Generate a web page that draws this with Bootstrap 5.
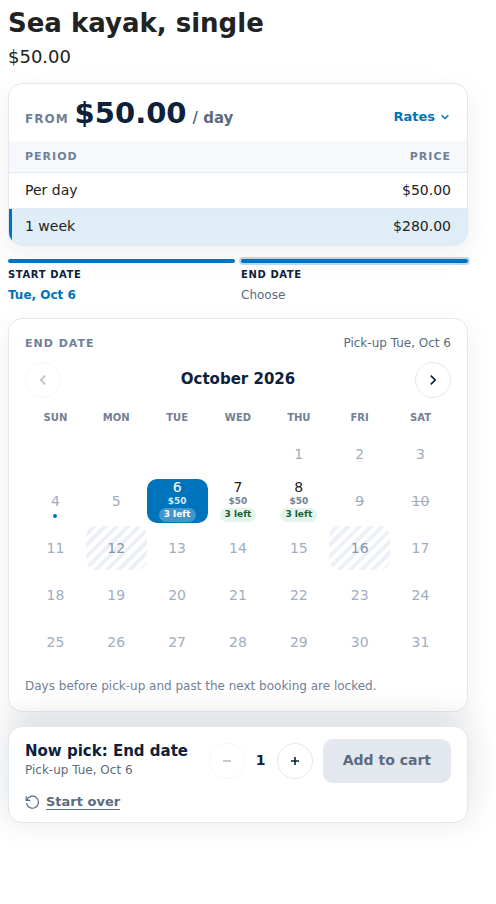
<!DOCTYPE html>
<html lang="en">
<head>
<meta charset="utf-8">
<meta name="viewport" content="width=device-width, initial-scale=1">
<title>Sea kayak, single</title>
<link href="https://cdn.jsdelivr.net/npm/bootstrap@5.3.0/dist/css/bootstrap.min.css" rel="stylesheet">
<style>
  :root { --brand: #0073bd; --navy: #0d213b; --muted: #718096; --slate: #5b6b80; --line: #e2e8f0; --ink: #222; }
  body { font-family: "DejaVu Sans", sans-serif; font-size: 14px; line-height: 20px; color: var(--ink); background: #fff; }
  .rental { padding: 8px 28px 48px 8px; }
  .product-title { font-size: 26px; line-height: 30px; font-weight: 700; color: var(--ink); }
  .product-price { font-size: 18px; line-height: 26px; margin: 6px 0 13px; }
  .panel { border: 1px solid var(--line); border-radius: 14px; background: #fff; box-shadow: 0 8px 28px rgba(15, 30, 50, .07); }
  .overline { font-size: 11px; line-height: 16px; font-weight: 700; letter-spacing: 1px; color: var(--muted); text-transform: uppercase; }

  .rates-head { padding: 11px 16px 10px; }
  .rates-head .overline { font-size: 12px; }
  .price-line { gap: 6px; }
  .amount { font-size: 29px; line-height: 36px; font-weight: 700; color: var(--navy); }
  .unit { font-size: 15px; font-weight: 700; color: var(--slate); }
  .rates-toggle { border: 0; background: none; padding: 0; font-size: 13px; font-weight: 700; color: var(--brand); }
  .rates-list { overflow: hidden; border-radius: 0 0 13px 13px; }
  .rates-table { --bs-table-bg: transparent; color: var(--ink); font-size: 14px; line-height: 20px; }
  .rates-table > :not(caption) > * > * { padding: 7px 16px 8px; border-bottom: 1px solid var(--line); }
  .rates-table > thead > tr > th { background: #f6f8fc; padding: 8px 16px 7px; }
  .rates-table > tbody > tr:last-child > td { border-bottom: 0; padding-bottom: 9px; background: #dfedf7; }
  .rates-table > tbody > tr:last-child > td:first-child { box-shadow: inset 3px 0 0 var(--brand); }

  .steps { display: grid; grid-template-columns: 1fr 1fr; gap: 6px; margin: 13px 0 14px; }
  .step-item { border: 0; background: none; padding: 0; text-align: left; color: var(--slate); font-size: 12px; line-height: 18px; }
  .step-bar { display: block; height: 4px; border-radius: 2px; background: var(--brand); }
  .step-item.current .step-bar { box-shadow: 0 0 0 2px rgba(0, 115, 189, .25); }
  .step-label { display: block; margin: 4px 0 3px; font-size: 10px; line-height: 16px; font-weight: 700; letter-spacing: .06em; color: var(--navy); }
  .step-value.chosen { font-weight: 700; color: var(--brand); }

  .calendar { padding: 15px 16px 16px; }
  .hint { font-size: 12px; line-height: 18px; color: var(--slate); }
  .month-nav { margin-top: 10px; }
  .month { font-size: 15px; line-height: 22px; font-weight: 700; color: var(--navy); padding-bottom: 2px; }
  .round-btn { width: 36px; height: 36px; padding: 0; flex: none; display: flex; align-items: center; justify-content: center; border: 1px solid var(--line); border-radius: 50%; background: #fff; color: var(--navy); }
  .round-btn:disabled { opacity: .35; color: #444; }
  .days { width: 100%; table-layout: fixed; border-collapse: separate; border-spacing: 0 3px; }
  .days th { font-size: 10px; line-height: 16px; padding: 9px 0 3px; font-weight: 700; text-align: center; color: var(--muted); }
  .days td { padding: 0; height: 44px; }
  .day-btn { display: flex; flex-direction: column; align-items: center; justify-content: center; width: 100%; height: 44px; padding: 0; border: 0; border-radius: 10px; background: none; color: var(--ink); font-size: 14px; line-height: 16px; }
  .day-btn.open { padding-bottom: 2px; }
  .day-btn:disabled { color: #a0aec0; }
  .day-btn.struck { text-decoration: line-through; }
  .day-btn.held { color: #8795aa; background: repeating-linear-gradient(135deg, #fff 0 4px, #edf0f7 4px 8px); }
  .day-btn.marked { position: relative; }
  .day-btn.marked::after { content: ""; position: absolute; bottom: 5px; width: 4px; height: 4px; border-radius: 50%; background: var(--brand); }
  .day-cost { font-size: 9px; line-height: 12px; font-weight: 700; color: var(--muted); }
  .stock { font-size: 9px; line-height: 12px; font-weight: 700; padding: 0 5px 2px; margin-top: 1px; border-radius: 7px; background: #e4f4ea; color: #17603a; }
  .day-btn.picked { background: var(--brand); color: #fff; }
  .picked .day-cost { color: #d9eaf5; }
  .picked .stock { background: rgba(255, 255, 255, .25); color: #fff; }
  .note { margin: 10px 0 0; color: var(--muted); }

  .summary { position: relative; margin-top: 14px; padding: 12px 16px; box-shadow: 0 -6px 34px rgba(15, 30, 50, .15); }
  .summary .month { line-height: 20px; padding: 0; }
  .caption-block { padding-bottom: 2px; }
  .qty { min-width: 24px; font-size: 14px; font-weight: 700; color: var(--navy); text-align: center; padding-bottom: 2px; }
  .actions { gap: 10px; }
  .cart-btn { border: 0; border-radius: 10px; height: 44px; padding: 0 20px 2px; background: #e2e8ee; color: var(--slate); font-size: 14px; font-weight: 700; white-space: nowrap; }
  .restart { display: flex; width: fit-content; align-items: center; gap: 6px; margin-top: 11px; font-size: 13px; line-height: 15px; font-weight: 700; color: var(--slate); text-decoration: none; }
  .restart span { border-bottom: 1px solid var(--slate); }
  svg { fill: none; stroke: currentColor; flex: none; }
</style>
</head>
<body>
<main class="rental">
  <h1 class="product-title mb-0">Sea kayak, single</h1>
  <p class="product-price">$50.00</p>

  <section class="panel" aria-label="Rates">
    <div class="rates-head d-flex justify-content-between align-items-center">
      <div class="price-line d-flex align-items-baseline">
        <span class="overline">From</span>
        <span class="amount">$50.00</span>
        <span class="unit">/ day</span>
      </div>
      <button type="button" class="rates-toggle d-flex align-items-center gap-1 mt-2">Rates
        <svg width="12" height="12" viewBox="0 0 12 12" stroke-width="1.4" aria-hidden="true"><path d="M2.6 4.2 6 7.6 9.4 4.2"/></svg>
      </button>
    </div>
    <div class="rates-list">
      <table class="table rates-table mb-0">
        <thead><tr><th class="overline" scope="col">Period</th><th class="overline text-end" scope="col">Price</th></tr></thead>
        <tbody>
          <tr><td>Per day</td><td class="text-end">$50.00</td></tr>
          <tr><td>1 week</td><td class="text-end">$280.00</td></tr>
        </tbody>
      </table>
    </div>
  </section>

  <div class="steps">
    <button type="button" class="step-item"><span class="step-bar"></span><span class="step-label">START DATE</span><span class="step-value chosen">Tue, Oct 6</span></button>
    <button type="button" class="step-item current"><span class="step-bar"></span><span class="step-label">END DATE</span><span class="step-value">Choose</span></button>
  </div>

  <section class="panel calendar" aria-label="End date">
    <div class="d-flex justify-content-between align-items-end">
      <span class="overline">End date</span><span class="hint">Pick-up Tue, Oct 6</span>
    </div>
    <div class="month-nav d-flex justify-content-between align-items-center">
      <button type="button" class="round-btn" disabled aria-label="Previous month"><svg width="16" height="16" viewBox="0 0 16 16" stroke-width="1.7" aria-hidden="true"><path d="M10.2 3.6 5.8 8l4.4 4.4"/></svg></button>
      <h2 class="month mb-0">October 2026</h2>
      <button type="button" class="round-btn" aria-label="Next month"><svg width="16" height="16" viewBox="0 0 16 16" stroke-width="1.7" aria-hidden="true"><path d="M5.8 3.6 10.2 8l-4.4 4.4"/></svg></button>
    </div>
    <table class="days">
      <thead><tr><th scope="col">SUN</th><th scope="col">MON</th><th scope="col">TUE</th><th scope="col">WED</th><th scope="col">THU</th><th scope="col">FRI</th><th scope="col">SAT</th></tr></thead>
      <tbody>
        <tr><td></td><td></td><td></td><td></td>
          <td><button class="day-btn" disabled>1</button></td><td><button class="day-btn" disabled>2</button></td><td><button class="day-btn" disabled>3</button></td></tr>
        <tr><td><button class="day-btn marked" disabled>4</button></td><td><button class="day-btn" disabled>5</button></td>
          <td><button class="day-btn open picked">6<span class="day-cost">$50</span><span class="stock">3 left</span></button></td>
          <td><button class="day-btn open">7<span class="day-cost">$50</span><span class="stock">3 left</span></button></td>
          <td><button class="day-btn open">8<span class="day-cost">$50</span><span class="stock">3 left</span></button></td>
          <td><button class="day-btn struck" disabled>9</button></td><td><button class="day-btn struck" disabled>10</button></td></tr>
        <tr><td><button class="day-btn" disabled>11</button></td><td><button class="day-btn held" disabled>12</button></td><td><button class="day-btn" disabled>13</button></td><td><button class="day-btn" disabled>14</button></td><td><button class="day-btn" disabled>15</button></td><td><button class="day-btn held" disabled>16</button></td><td><button class="day-btn" disabled>17</button></td></tr>
        <tr><td><button class="day-btn" disabled>18</button></td><td><button class="day-btn" disabled>19</button></td><td><button class="day-btn" disabled>20</button></td><td><button class="day-btn" disabled>21</button></td><td><button class="day-btn" disabled>22</button></td><td><button class="day-btn" disabled>23</button></td><td><button class="day-btn" disabled>24</button></td></tr>
        <tr><td><button class="day-btn" disabled>25</button></td><td><button class="day-btn" disabled>26</button></td><td><button class="day-btn" disabled>27</button></td><td><button class="day-btn" disabled>28</button></td><td><button class="day-btn" disabled>29</button></td><td><button class="day-btn" disabled>30</button></td><td><button class="day-btn" disabled>31</button></td></tr>
      </tbody>
    </table>
    <p class="hint note">Days before pick-up and past the next booking are locked.</p>
  </section>

  <section class="panel summary" aria-label="Booking">
    <div class="d-flex align-items-center justify-content-between">
      <div class="caption-block">
        <div class="month">Now pick: End date</div>
        <div class="hint">Pick-up Tue, Oct 6</div>
      </div>
      <div class="actions d-flex align-items-center">
        <div class="d-flex align-items-center gap-1">
          <button type="button" class="round-btn" disabled aria-label="Fewer"><svg width="12" height="12" viewBox="0 0 12 12" stroke-width="1.6" aria-hidden="true"><path d="M2 6h8"/></svg></button>
          <span class="qty">1</span>
          <button type="button" class="round-btn" aria-label="More"><svg width="12" height="12" viewBox="0 0 12 12" stroke-width="1.6" aria-hidden="true"><path d="M2 6h8M6 2v8"/></svg></button>
        </div>
        <button type="button" class="cart-btn">Add to cart</button>
      </div>
    </div>
    <a href="#" class="restart"><svg width="15" height="15" viewBox="0 0 15 15" stroke-width="1.2" stroke-linecap="round" stroke-linejoin="round" aria-hidden="true"><path d="M1.8 5.2A6 6 0 1 1 1.6 8.5M1.2 1.6v3.8H5"/></svg><span>Start over</span></a>
  </section>
</main>
<script src="https://cdn.jsdelivr.net/npm/bootstrap@5.3.0/dist/js/bootstrap.bundle.min.js"></script>
</body>
</html>
